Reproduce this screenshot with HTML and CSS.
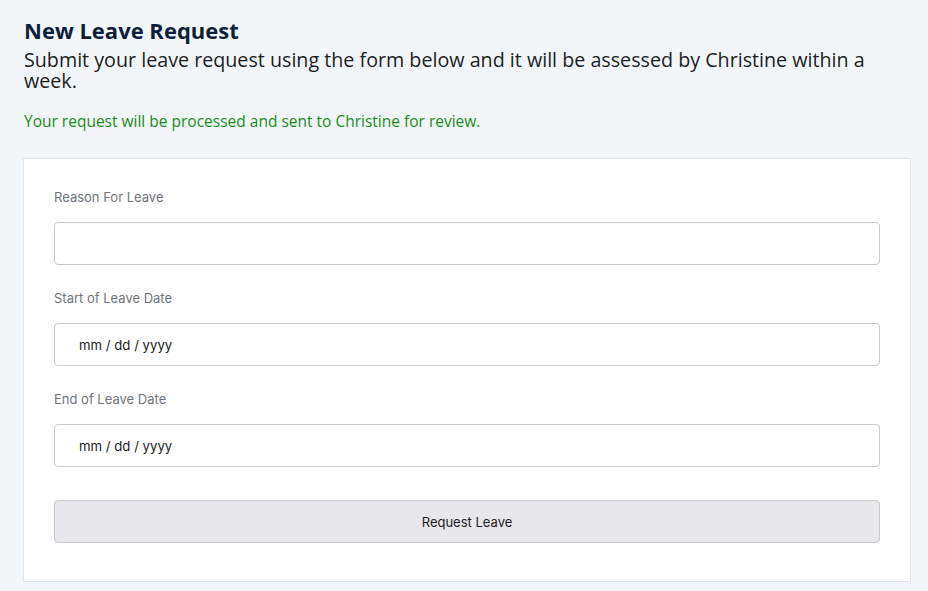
FILE: index.html
```html
<!DOCTYPE html>
<html>
<head>
<meta charset="utf-8">
<link rel="stylesheet" href="styles.css">
</head>
<body>
<main class="page">
  <h1 class="title">New Leave Request</h1>
  <p class="subtitle">Submit your leave request using the form below and it will be assessed by Christine within a week.</p>
  <p class="notice">Your request will be processed and sent to Christine for review.</p>
  <form class="card">
    <label class="label" for="reason">Reason For Leave</label>
    <input class="field" id="reason" type="text">
    <label class="label" for="start">Start of Leave Date</label>
    <input class="field date" id="start" type="text" placeholder="mm / dd / yyyy">
    <label class="label" for="end">End of Leave Date</label>
    <input class="field date" id="end" type="text" placeholder="mm / dd / yyyy">
    <button class="submit" type="button">Request Leave</button>
  </form>
</main>
</body>
</html>
```
FILE: styles.css
```css
html, body {
  margin: 0;
  padding: 0;
  background: #f3f6f9;
}
.page {
  padding: 16px 17px 10px 23px;
  font-family: "Open Sans", "Noto Sans", sans-serif;
}
.title {
  margin: 0 0 0 1px;
  font-size: 22px;
  line-height: 28px;
  font-weight: 700;
  color: #0d1f3c;
}
.subtitle {
  margin: 5px 0 0 1px;
  font-size: 19.7px;
  line-height: 21px;
  color: #1b1e24;
}
.notice {
  margin: 20px 0 0 1px;
  font-size: 15.5px;
  line-height: 20px;
  color: #1a8c1a;
}
.card {
  margin-top: 27px;
  background: #fff;
  border: 1px solid #e1e3ef;
  padding: 29px 30px 38px 30px;
  display: flex;
  flex-direction: column;
}
.label {
  font-family: Inter, Roboto, sans-serif;
  font-size: 13px;
  line-height: 18px;
  color: #6f747b;
  margin-bottom: 16px;
}
.field {
  box-sizing: border-box;
  height: 43px;
  border: 1px solid #c9c9c9;
  border-radius: 4px;
  background: #fff;
  margin: 0 0 24px 0;
  padding: 0 24px;
  font-family: Inter, Roboto, sans-serif;
  font-size: 13.2px;
  color: #1c1c1c;
  outline: none;
}
.field::placeholder {
  color: #1c1c1c;
  opacity: 1;
}
.field.date:last-of-type {
  margin-bottom: 33px;
}
.submit {
  box-sizing: border-box;
  height: 43px;
  border: 1px solid #c9c9c9;
  border-radius: 4px;
  background: #e8e7ec;
  font-family: Inter, Roboto, sans-serif;
  font-size: 13px;
  color: #1c1c1c;
  cursor: pointer;
}
```
